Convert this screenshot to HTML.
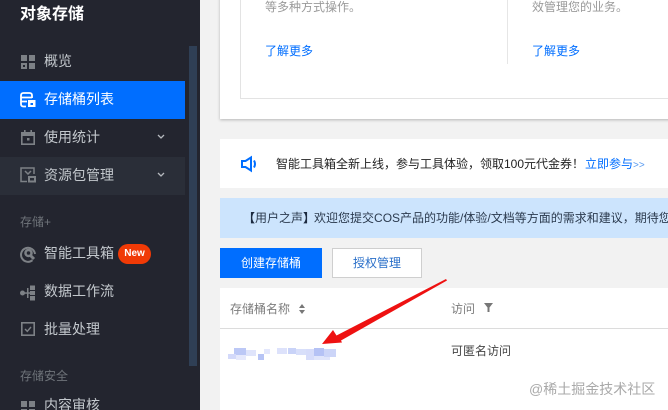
<!DOCTYPE html>
<html>
<head>
<meta charset="utf-8">
<style>
html,body{margin:0;padding:0;width:668px;height:410px;overflow:hidden;background:#f2f2f2;}
body{position:relative;font-family:"Liberation Sans","Noto Sans CJK SC",sans-serif;font-size:13px;}
.a{position:absolute;white-space:nowrap;line-height:18px;}
.box{position:absolute;}
svg{position:absolute;overflow:visible;}
.nav{color:#c3c8cd;font-size:14px;left:44px;line-height:20px;}
.grp{color:#6f747a;font-size:12px;left:20px;}
.m i{position:absolute;display:block;}
</style>
</head>
<body>
<!-- sidebar -->
<div class="box" style="left:0;top:0;width:200px;height:410px;background:#23252f;"></div>
<div class="box" style="left:189px;top:46px;width:8px;height:320px;background:#2f3f55;"></div>
<div class="box" style="left:0;top:81px;width:185px;height:38px;background:#006eff;"></div>
<div class="box" style="left:0;top:157px;width:185px;height:38px;background:#2a2e38;"></div>

<div class="a" style="left:20px;top:4px;color:#fff;font-size:16px;font-weight:bold;line-height:22px;">对象存储</div>

<!-- 概览 icon -->
<svg style="left:21px;top:55px" width="14" height="14" viewBox="0 0 14 14" fill="#7d8186">
<path fill-rule="evenodd" d="M0 0h6v6H0zM8 0h6v6H8zM8 8h6v6H8zM0 8h6v6H0zM2 10v2h2v-2z"/></svg>
<div class="a nav" style="top:51px;">概览</div>

<!-- bucket icon -->
<svg style="left:20px;top:92px" width="16" height="16" viewBox="0 0 16 16" fill="none" stroke="#fff" stroke-width="1.8">
<path d="M6 14.500H3.500Q1 14.500 1 12V3.500Q1 1 3.500 1H9.500Q12 1 12 3.500V6"/><path d="M1 5.500H12M1 9.500H7"/>
<rect x="8" y="8" width="7.500" height="7" fill="#fff" stroke="none"/><rect x="10.500" y="11" width="2.500" height="2" fill="#006eff" stroke="none"/></svg>
<div class="a nav" style="top:89px;color:#fff;">存储桶列表</div>

<!-- calendar icon -->
<svg style="left:21px;top:130px" width="14" height="15" viewBox="0 0 14 15" fill="#7d8186">
<path fill-rule="evenodd" d="M3 0h1.600v2h4.800V0H11v2h3v13H0V2h3zM1.600 6v7.400h10.800V6z"/><rect x="6" y="8" width="2.500" height="2.500"/></svg>
<div class="a nav" style="top:127px;">使用统计</div>
<svg style="left:157px;top:134px" width="8" height="6" viewBox="0 0 8 6" fill="none" stroke="#b5b9be" stroke-width="1.300"><path d="M1 1l3 3 3-3"/></svg>

<!-- package icon -->
<svg style="left:20px;top:167px" width="16" height="16" viewBox="0 0 16 16" fill="none" stroke="#7d8186" stroke-width="1.500">
<path d="M7 14.500H1V1h13v6"/><path d="M5 4l3 3 3-3"/><rect x="9" y="10" width="6" height="4.500" stroke-width="2"/></svg>
<div class="a nav" style="top:165px;">资源包管理</div>
<svg style="left:157px;top:172px" width="8" height="6" viewBox="0 0 8 6" fill="none" stroke="#b5b9be" stroke-width="1.300"><path d="M1 1l3 3 3-3"/></svg>

<div class="a grp" style="top:213px;">存储+</div>

<!-- tool icon -->
<svg style="left:20px;top:246px" width="16" height="16" viewBox="0 0 16 16" fill="none" stroke="#7d8186">
<path stroke-width="2" d="M12.500 14.200A7 7 0 1 1 15 8"/><circle cx="8.500" cy="7" r="3" stroke-width="2.500"/><path stroke-width="3" d="M10.500 9.500l3.500 3.500"/></svg>
<div class="a nav" style="top:243px;">智能工具箱</div>
<div class="box" style="left:118px;top:244px;width:33px;height:20px;border-radius:10px;background:#f03a06;"></div>
<div class="a" style="left:118px;width:33px;text-align:center;top:245px;color:#fff;font-size:10px;font-weight:bold;">New</div>

<!-- flow icon -->
<svg style="left:20px;top:285px" width="16" height="16" viewBox="0 0 16 16" fill="#7d8186">
<circle cx="2.500" cy="8" r="2.500"/><rect x="4" y="7.300" width="7" height="1.500"/><rect x="7" y="3" width="1.500" height="10"/>
<rect x="10" y="0.500" width="5" height="4.500"/><rect x="10" y="6" width="5" height="4"/><rect x="10" y="11" width="5" height="4.500"/></svg>
<div class="a nav" style="top:281px;">数据工作流</div>

<!-- check icon -->
<svg style="left:21px;top:322px" width="14" height="14" viewBox="0 0 14 14" fill="none" stroke="#7d8186">
<rect x="0.800" y="0.800" width="12.400" height="12.400" stroke-width="1.600"/><path stroke-width="1.400" d="M4 7l2.300 2.300L10 5"/></svg>
<div class="a nav" style="top:319px;">批量处理</div>

<div class="a grp" style="top:367px;">存储安全</div>

<svg style="left:21px;top:401px" width="14" height="14" viewBox="0 0 14 14" fill="#7d8186">
<path d="M0 0h6v6H0zM8 0h6v6H8zM8 8h6v6H8zM0 8h6v6H0z"/></svg>
<div class="a nav" style="top:395px;">内容审核</div>

<!-- top card -->
<div class="box" style="left:220px;top:-5px;width:460px;height:124px;background:#fff;box-shadow:0 1px 3px rgba(0,0,0,.25);"></div>
<div class="box" style="left:240px;top:-5px;width:440px;height:103px;border-left:1px solid #e3e3e3;border-bottom:1px solid #e3e3e3;"></div>
<div class="box" style="left:507px;top:0;width:1px;height:64px;background:#e6e6e6;"></div>
<div class="a" style="left:265px;top:-2px;font-size:12px;color:#9a9a9a;">等多种方式操作。</div>
<div class="a" style="left:532px;top:-2px;font-size:12px;color:#9a9a9a;">效管理您的业务。</div>
<div class="a" style="left:265px;top:42px;font-size:12px;color:#006eff;">了解更多</div>
<div class="a" style="left:532px;top:42px;font-size:12px;color:#006eff;">了解更多</div>

<!-- notice -->
<div class="box" style="left:220px;top:139px;width:448px;height:49px;background:#fff;"></div>
<svg style="left:241px;top:156px" width="17" height="16" viewBox="0 0 17 16" fill="none" stroke="#006eff" stroke-width="2">
<path d="M1 5h3.500L10 1.500v13L4.500 11H1z"/><path d="M13 4.500Q15 8 13 11.500"/></svg>
<div class="a" style="left:276px;top:155px;font-size:12px;color:#222;">智能工具箱全新上线，参与工具体验，领取100元代金券！<span style="color:#006eff;margin-left:1px;">立即参与<span style="font-size:10px;color:#5a9bf0;">&gt;&gt;</span></span></div>

<!-- blue banner -->
<div class="box" style="left:220px;top:198px;width:448px;height:40px;background:#cce4fd;"></div>
<div class="a" style="left:243px;top:209px;font-size:12px;color:#2b3a4e;"><span style="font-weight:bold;color:#1c2a40;">【</span>用户之声<span style="font-weight:bold;color:#1c2a40;">】</span><span style="margin-left:-1px;">欢迎您提交COS产品的功能/体验/文档等方面的需求和建议，期待您</span></div>

<!-- buttons -->
<div class="box" style="left:220px;top:248px;width:102px;height:30px;background:#006eff;"></div>
<div class="a" style="left:220px;width:102px;text-align:center;top:254px;font-size:12px;color:#fff;">创建存储桶</div>
<div class="box" style="left:332px;top:248px;width:88px;height:28px;background:#fff;border:1px solid #cfcfcf;"></div>
<div class="a" style="left:332px;width:90px;text-align:center;top:254px;font-size:12px;color:#2a6fc9;">授权管理</div>

<!-- table -->
<div class="box" style="left:220px;top:288px;width:448px;height:122px;background:#fff;"></div>
<div class="box" style="left:220px;top:328px;width:448px;height:1px;background:#dcdcdc;"></div>
<div class="a" style="left:230px;top:300px;font-size:12px;color:#7c7c7c;">存储桶名称</div>
<svg style="left:298px;top:304px" width="8" height="10" viewBox="0 0 8 10" fill="#777"><path d="M4 0l3 4H1zM4 10L1 6h6z"/></svg>
<div class="a" style="left:451px;top:300px;font-size:12px;color:#7c7c7c;">访问</div>
<svg style="left:484px;top:303px" width="9" height="9" viewBox="0 0 9 9" fill="#777"><path d="M0 0h9L5.500 4.500V9h-2V4.500z"/></svg>
<div class="a" style="left:451px;top:342px;font-size:12px;color:#444;">可匿名访问</div>

<!-- mosaic -->
<div class="m">
<i style="left:234px;top:348px;width:12px;height:7px;background:#bcc8f6"></i>
<i style="left:228px;top:354px;width:8px;height:5px;background:#d3d9fa"></i>
<i style="left:236px;top:355px;width:10px;height:5px;background:#e6e9fc"></i>
<i style="left:246px;top:350px;width:10px;height:6px;background:#dfe4fb"></i>
<i style="left:258px;top:354px;width:6px;height:6px;background:#b7c4f5"></i>
<i style="left:264px;top:349px;width:6px;height:5px;background:#e3e7fc"></i>
<i style="left:277px;top:348px;width:10px;height:6px;background:#dde2fb"></i>
<i style="left:288px;top:348px;width:8px;height:6px;background:#c9d3f8"></i>
<i style="left:296px;top:349px;width:10px;height:6px;background:#d8dffa"></i>
<i style="left:306px;top:349px;width:8px;height:11px;background:#d6dcfa"></i>
<i style="left:314px;top:348px;width:10px;height:8px;background:#b5c2f5"></i>
<i style="left:314px;top:356px;width:16px;height:4px;background:#e0e5fb"></i>
<i style="left:324px;top:349px;width:12px;height:8px;background:#ccd5f8"></i>
</div>

<!-- arrow -->
<svg style="left:0;top:0" width="668" height="410" viewBox="0 0 668 410">
<path fill="#ee1111" d="M322 344L333 330L336.500 335.500L446 279L447 280.500L341 340.500L342 342.500z"/></svg>

<!-- watermark -->
<div class="a" style="left:529px;top:380px;font-size:14px;color:#a9a9a9;">@稀土掘金技术社区</div>
</body>
</html>
